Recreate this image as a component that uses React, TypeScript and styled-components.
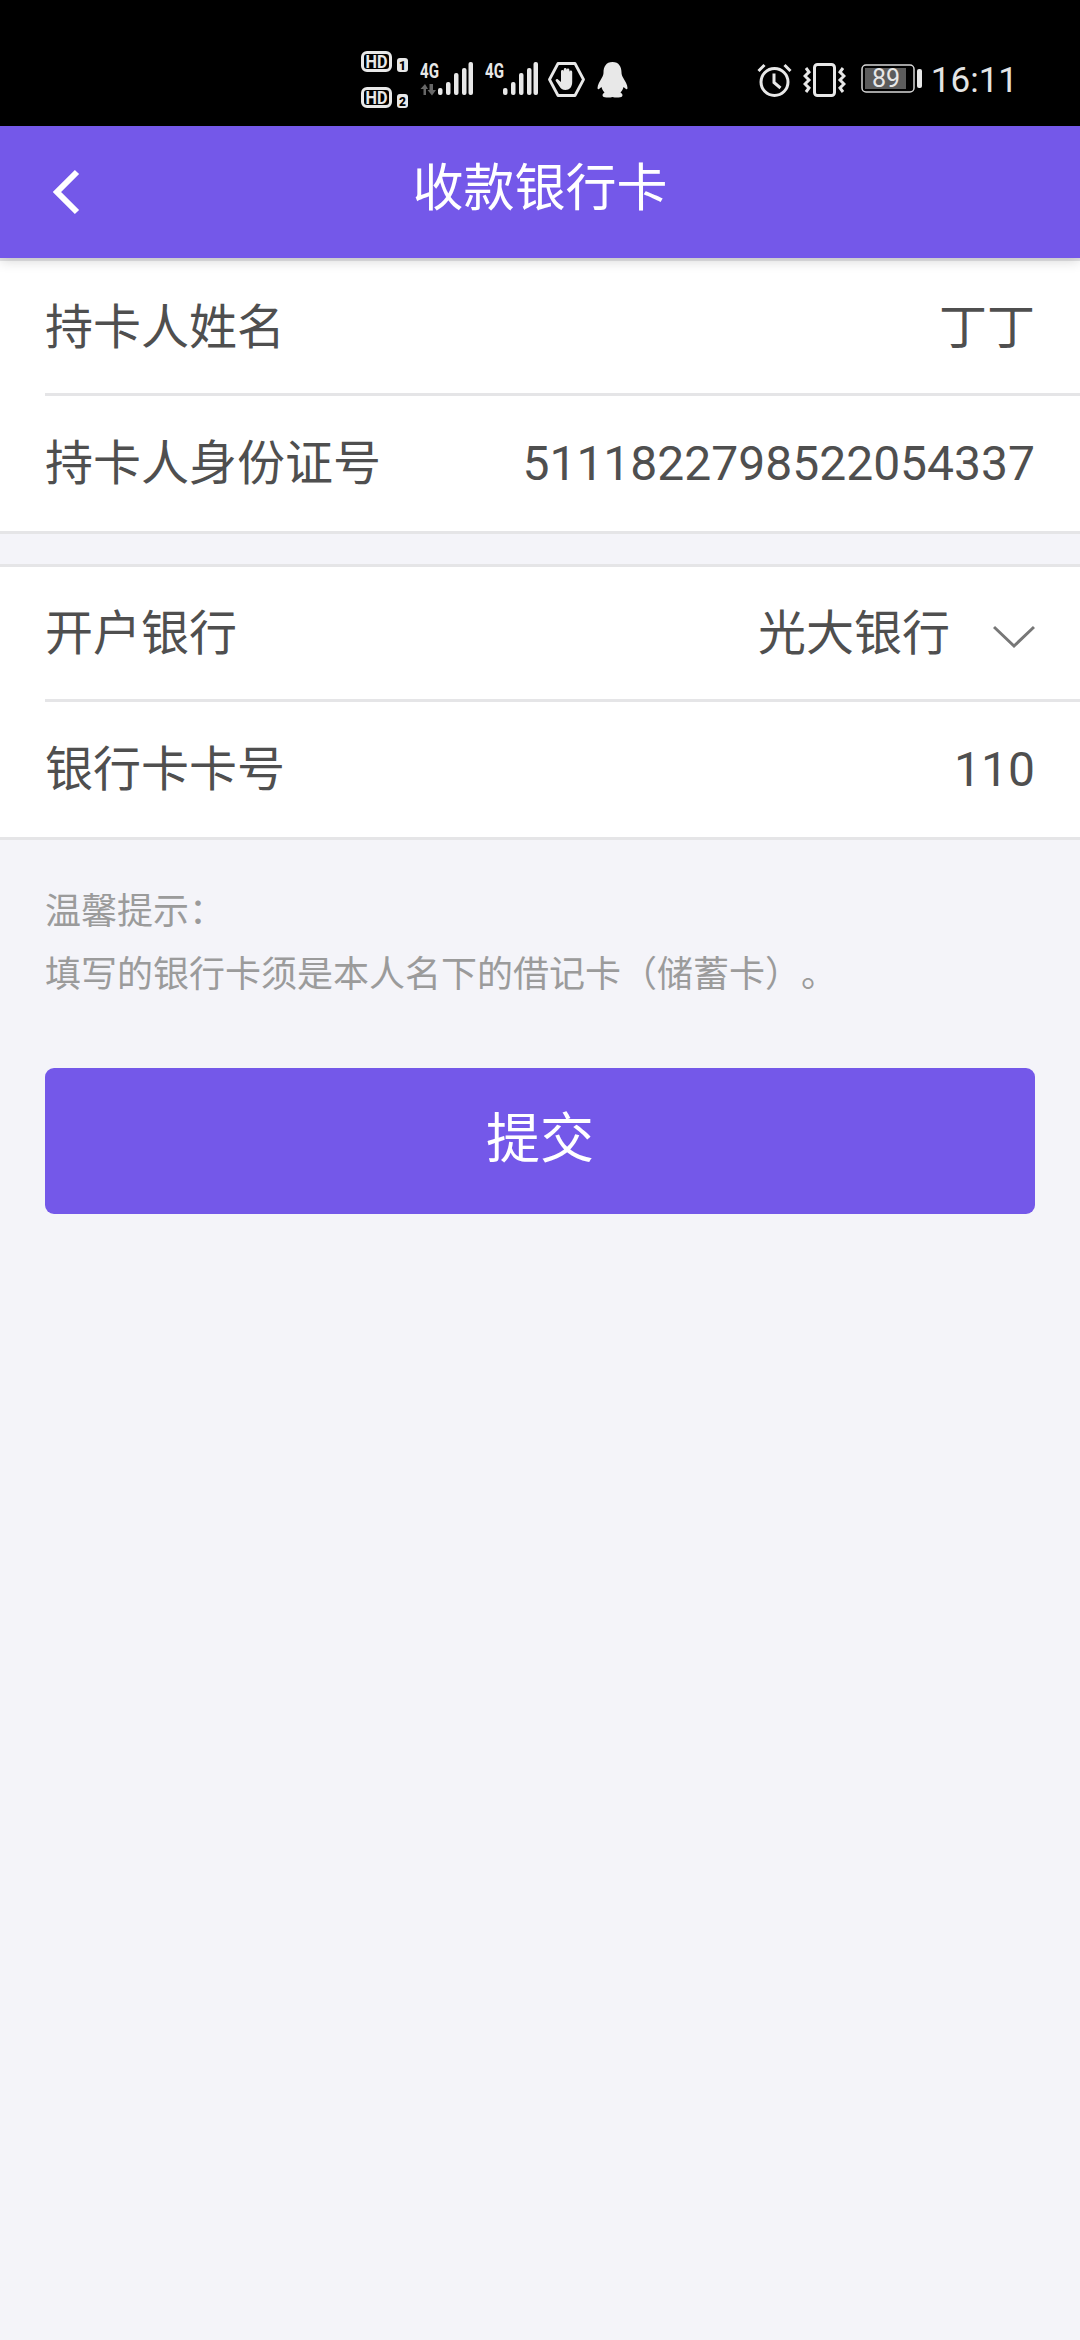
import React from "react";
import styled, { createGlobalStyle } from "styled-components";

const Global = createGlobalStyle`
  html, body { margin: 0; padding: 0; background: #f4f4f9; }
  body { font-family: Roboto, "Noto Sans CJK SC", sans-serif; text-spacing-trim: space-all; }
  * { box-sizing: border-box; }
`;

const Page = styled.div`
  width: 1080px;
  height: 2340px;
  overflow: hidden;
  background: #f4f4f9;
`;

const StatusBar = styled.div`
  height: 126px;
  background: #000;
  color: #e8e8e8;
  display: flex;
  align-items: flex-start;
  padding: 51px 62px 0 361px;
`;

const StatusIcon = styled.svg<{ $ml?: number; $mt?: number }>`
  display: block;
  flex: none;
  margin-left: ${(p) => p.$ml ?? 0}px;
  margin-top: ${(p) => p.$mt ?? 0}px;
`;

const Spacer = styled.div`
  flex: 1;
`;

const Clock = styled.span`
  font-size: 35px;
  line-height: 41px;
  margin-top: 9px;
  margin-left: 9px;
  color: #e4e4e4;
`;

const Header = styled.header`
  position: relative;
  z-index: 1;
  height: 132px;
  background: #7458e9;
  box-shadow: 0 3px 12px rgba(0, 0, 0, 0.16);
  display: flex;
  align-items: center;
  justify-content: center;
`;

const BackIcon = styled.svg`
  position: absolute;
  left: 52px;
  top: 43px;
`;

const Title = styled.h1`
  margin: 0 0 6px;
  color: #fff;
  font-size: 51px;
  font-weight: 400;
  line-height: 60px;
`;

const Card = styled.section`
  background: #fff;
  border-top: 3px solid #e5e5e7;
  border-bottom: 3px solid #e5e5e7;
`;

const SecondCard = styled(Card)`
  margin-top: 30px;
`;

const Row = styled.div<{ $last?: boolean }>`
  height: 135px;
  margin-left: 45px;
  padding: ${(p) => (p.$last ? "0" : "2px")} 45px 0 0;
  display: flex;
  align-items: center;
  justify-content: space-between;
  border-bottom: ${(p) => (p.$last ? "none" : "3px solid #e5e5e7")};
  color: #4f4f4f;
  font-size: 48px;
`;

const Label = styled.span`
  line-height: 60px;
`;

const Value = styled.span`
  line-height: 60px;
`;

const Picker = styled.div`
  display: flex;
  align-items: center;
  gap: 43px;
`;

const Chevron = styled.svg`
  display: block;
  margin-top: 6px;
`;

const Hint = styled.div`
  padding: 41px 45px 0;
  color: #9b9b9b;
  font-size: 36px;
  line-height: 63px;
`;

const Submit = styled.button`
  display: block;
  width: 990px;
  height: 146px;
  margin: 61px 45px 0;
  border: 0;
  border-radius: 9px;
  background: #7458e9;
  color: #fff;
  font-family: inherit;
  font-size: 54px;
  padding: 0 0 14px;
`;

const HdStack = styled.div`
  display: flex;
  flex-direction: column;
  gap: 15px;
`;

const HdBadge = ({ n }: { n: string }) => (
  <StatusIcon width="47" height="21" viewBox="0 0 47 21">
    <rect x="1.5" y="1.5" width="28" height="18" rx="4.5" fill="#000" stroke="#e8e8e8" strokeWidth="3" />
    <text x="15.5" y="16.5" fontFamily="Roboto" fontSize="18" fontWeight="700" textAnchor="middle" textLength="22" lengthAdjust="spacingAndGlyphs" fill="#e8e8e8">HD</text>
    <rect x="36" y="7" width="11" height="14" rx="3" fill="#e8e8e8" />
    <text x="41.5" y="18.5" fontFamily="Roboto" fontSize="12" fontWeight="900" textAnchor="middle" fill="#000">{n}</text>
  </StatusIcon>
);

const Signal = ({ arrows }: { arrows?: boolean }) => (
  <StatusIcon width="53" height="40" viewBox="0 -6 53 40" $ml={12} $mt={5}>
    <text transform="translate(0 15.500) scale(0.72 1)" fontFamily="Roboto" fontSize="21" fontWeight="700" fill="#e8e8e8">4G</text>
    {arrows && (
      <path d="M3.500 33v-6H0.500L5 22l3 5H6v6ZM9.500 22v6H7.500l4.500 5.500 4-5.500h-3v-6Z" fill="#666" />
    )}
    <g fill="#e8e8e8">
      <rect x="18" y="26" width="4.500" height="7" rx="2" />
      <rect x="26" y="20" width="4.500" height="13" rx="2" />
      <rect x="34" y="11" width="4.500" height="22" rx="2" />
      <rect x="42" y="6" width="4.500" height="27" rx="2" />
      <rect x="48.500" y="0" width="4.500" height="33" rx="2" />
    </g>
  </StatusIcon>
);

export default function App() {
  return (
    <Page>
      <Global />
      <StatusBar>
        <HdStack>
          <HdBadge n="1" />
          <HdBadge n="2" />
        </HdStack>
        <Signal arrows />
        <Signal />
        <StatusIcon width="37" height="35" viewBox="0 0 37 35" $ml={10} $mt={11}>
          <path d="M10 1.500h17L35.500 17.500 27 33.500H10L1.500 17.500Z" fill="none" stroke="#e8e8e8" strokeWidth="2.800" strokeLinejoin="round" />
          <path d="M13 16V9.500a1.400 1.400 0 0 1 2.800 0V15V7.500a1.400 1.400 0 0 1 2.800 0V15V8a1.400 1.400 0 0 1 2.800 0v7-5a1.400 1.400 0 0 1 2.800 0v10c0 5-2.700 8-6.700 8-3 0-4.800-1.500-6.300-4l-3.400-5c-.8-1.500 1-2.800 2.200-1.600L13 20Z" fill="#e8e8e8" />
        </StatusIcon>
        <StatusIcon width="31" height="36" viewBox="0 0 31 36" $ml={12} $mt={11}>
          <path d="M15.500 0C9 0 6.500 5 6.500 10.500c0 2-.5 3-1.500 5C3 19 .5 22.500.5 26c0 1 .5 1.500 1.500 1l2.500-2c.5 2 1.500 4 3 5.500C5.500 32 5 33 6 34.500c1 1 6 1.500 9.500.5 3.500 1 8.500.5 9.500-.5 1-1.500.5-2.500-1.500-4 1.500-1.500 2.500-3.500 3-5.500l2.500 2c1 .5 1.500 0 1.500-1 0-3.500-2.500-7-4.500-10.500-1-2-1.500-3-1.500-5C24.500 5 22 0 15.500 0Z" fill="#e8e8e8" />
        </StatusIcon>
        <Spacer />
        <StatusIcon width="35" height="34" viewBox="0 0 35 34" $mt={12}>
          <circle cx="17.500" cy="19" r="13.500" fill="none" stroke="#e8e8e8" strokeWidth="3" />
          <path d="M17 10.500v9l6.500 5.500M1.500 8 7.500 2M33.500 8 27.500 2" fill="none" stroke="#e8e8e8" strokeWidth="3" />
        </StatusIcon>
        <StatusIcon width="43" height="34" viewBox="0 0 43 34" $ml={11} $mt={12}>
          <rect x="11.500" y="1.500" width="20" height="31" rx="3" fill="none" stroke="#e8e8e8" strokeWidth="3" />
          <path d="M3 5 6 9 2 13 6 17 2 21 6 25 3 29M40 5 37 9 41 13 37 17 41 21 37 25 40 29" fill="none" stroke="#e8e8e8" strokeWidth="3" />
        </StatusIcon>
        <StatusIcon width="61" height="30" viewBox="0 0 61 30" $ml={15} $mt={13}>
          <rect x="1" y="1" width="52" height="27" rx="4" fill="none" stroke="#d8d8d8" strokeWidth="1.500" />
          <rect x="4" y="4" width="41" height="21" fill="#5c5c5c" />
          <text x="25" y="23" fontFamily="Roboto" fontSize="25" textAnchor="middle" fill="#e8e8e8">89</text>
          <rect x="56" y="5" width="5" height="19" rx="2" fill="#e8e8e8" />
        </StatusIcon>
        <Clock>16:11</Clock>
      </StatusBar>
      <Header>
        <BackIcon width="30" height="46" viewBox="0 0 30 46">
          <path d="M25 3 5 23l20 20" fill="none" stroke="#fff" strokeWidth="6" />
        </BackIcon>
        <Title>收款银行卡</Title>
      </Header>
      <Card>
        <Row>
          <Label>持卡人姓名</Label>
          <Value>丁丁</Value>
        </Row>
        <Row $last>
          <Label>持卡人身份证号</Label>
          <Value>5111822798522054337</Value>
        </Row>
      </Card>
      <SecondCard>
        <Row>
          <Label>开户银行</Label>
          <Picker>
            <Value>光大银行</Value>
            <Chevron width="42" height="24" viewBox="0 0 42 24">
              <path d="M1 2l20 19L41 2" fill="none" stroke="#777" strokeWidth="3" />
            </Chevron>
          </Picker>
        </Row>
        <Row $last>
          <Label>银行卡卡号</Label>
          <Value>110</Value>
        </Row>
      </SecondCard>
      <Hint>
        <div>温馨提示：</div>
        <div>填写的银行卡须是本人名下的借记卡（储蓄卡）。</div>
      </Hint>
      <Submit>提交</Submit>
    </Page>
  );
}
